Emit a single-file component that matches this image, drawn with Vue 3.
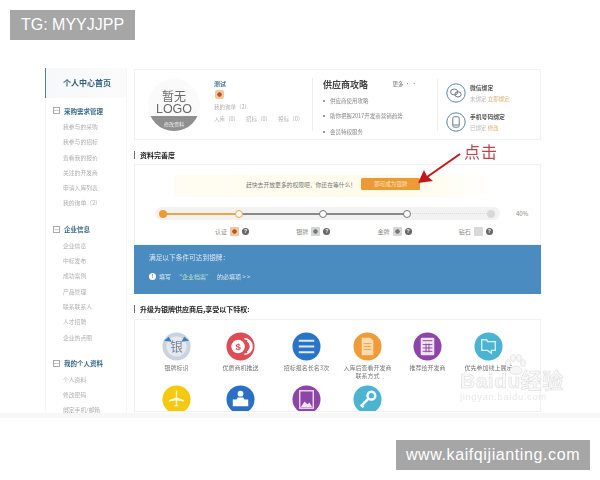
<script setup>
const groups = [
  { title: '采购需求管理', items: ['我参与的采购', '我参与的招标', '查看我的报价', '关注的开发商', '申请入库列表', '我的询单（2）'] },
  { title: '企业信息', items: ['企业信息', '中标发布', '成功案例', '产品管理', '联系联系人', '人才招聘', '企业热点图'] },
  { title: '我的个人资料', items: ['个人资料', '修改密码', '绑定手机/邮箱'] },
]
const news = ['供应商使用攻略', '助你把握2017开发商营销趋势', '会员特权服务']
const stages = [
  { name: '认证', tone: 'orange' },
  { name: '银牌', tone: 'grey' },
  { name: '金牌', tone: 'grey' },
  { name: '钻石', tone: 'light' },
]
const perks = [
  { label: '银牌标识', color: '#c9d2de', kind: 'silver' },
  { label: '优质商机推送', color: '#dc4d55', kind: 'coin' },
  { label: '招标报名长名3次', color: '#2a74c8', kind: 'list' },
  { label: '入库后查看开发商\n联系方式', color: '#f09a38', kind: 'doc' },
  { label: '推荐给开发商', color: '#8d46a8', kind: 'calc' },
  { label: '优先参加线上展示', color: '#4ab4d2', kind: 'screen' },
  { label: '', color: '#f5c90f', kind: 'plane' },
  { label: '', color: '#2a6fc4', kind: 'person' },
  { label: '', color: '#8d46a8', kind: 'photo' },
  { label: '', color: '#4ab4d2', kind: 'key' },
]
</script>

<template>
  <div class="page">
    <div class="shot">
      <aside class="side">
        <div class="home">个人中心首页</div>
        <section v-for="g in groups" :key="g.title" class="group">
          <h4><i class="minus"></i>{{ g.title }}</h4>
          <p v-for="it in g.items" :key="it">{{ it }}</p>
        </section>
      </aside>

      <main class="main">
        <div class="card top">
          <div class="logo">
            <span class="l1">暂无</span>
            <span class="l2">LOGO</span>
            <span class="l3">修改资料</span>
          </div>
          <div class="who">
            <b>测试</b>
            <i class="medal"></i>
            <p>我的询单（2）</p>
            <p class="counts"><span>入库（0）</span><span>招标（0）</span><span>投标（0）</span></p>
          </div>
          <div class="guide">
            <div class="guide-head"><strong>供应商攻略</strong><span>更多 • •</span></div>
            <p v-for="n in news" :key="n"><i></i>{{ n }}</p>
          </div>
          <div class="binds">
            <div class="bind">
              <svg viewBox="0 0 20 20" class="bind-ic">
                <circle cx="10" cy="10" r="9.2" fill="#fff" stroke="#5d8a9c" />
                <ellipse cx="8.2" cy="9" rx="3.6" ry="3" fill="none" stroke="#6a7d88" />
                <ellipse cx="12" cy="11.4" rx="3.2" ry="2.6" fill="none" stroke="#6a7d88" />
              </svg>
              <div><b>微信绑定</b><p>未绑定 <em>立即绑定</em></p></div>
            </div>
            <div class="bind">
              <svg viewBox="0 0 20 20" class="bind-ic">
                <circle cx="10" cy="10" r="9.2" fill="#fff" stroke="#5d8a9c" />
                <rect x="6.8" y="4.8" width="6.4" height="10.4" rx="1.4" fill="none" stroke="#6a7d88" />
                <path d="M7 13h6" stroke="#6a7d88" />
              </svg>
              <div><b>手机号码绑定</b><p>已绑定 <em>修改</em></p></div>
            </div>
          </div>
        </div>

        <h3 class="sec first">资料完善度</h3>
        <div class="card progress">
          <div class="notice">
            <span>赶快去开放更多的权限吧，你还在等什么！</span>
            <button>即可成为银牌</button>
          </div>
          <div class="track-row">
            <div class="track">
              <div class="line done"></div>
              <div class="line mid"></div>
              <div class="line dots"></div>
              <i class="node n1"></i>
              <i class="node n2"></i>
              <i class="node n3"></i>
              <i class="node n4"></i>
              <i class="node n5"></i>
            </div>
            <span class="pct">40%</span>
          </div>
          <div class="stages">
            <div v-for="s in stages" :key="s.name" class="stage">
              {{ s.name }}<i class="tag" :class="s.tone"></i><i class="help">?</i>
            </div>
          </div>
        </div>

        <div class="blue">
          <p>满足以下条件可达到银牌：</p>
          <p class="req"><i>!</i>填写 <span>“企业档案”</span> 的必填项 &gt; &gt;</p>
        </div>

        <h3 class="sec second">升级为银牌供应商后,享受以下特权:</h3>
        <div class="card perks">
          <div v-for="p in perks" :key="p.kind" class="perk">
            <svg viewBox="0 0 30 30" class="perk-ic">
              <circle cx="15" cy="15" r="14.5" :fill="p.color" />
              <template v-if="p.kind === 'silver'">
                <circle cx="15" cy="15" r="10.500" fill="#e4e8ef" />
                <path d="M2 9l5-4 3 5zM28 9l-5-4-3 5z" fill="#3f7fc0" />
                <text x="15" y="20" text-anchor="middle" class="glyph">银</text>
              </template>
              <template v-else-if="p.kind === 'coin'">
                <path d="M19 7a8 8 0 0 1 0 16M22 9a7 7 0 0 1 0 12" fill="none" stroke="#fff" stroke-width="1.6" />
                <circle cx="12.5" cy="15" r="7" fill="#fff" />
                <text x="12.5" y="18.5" text-anchor="middle" class="dollar">$</text>
              </template>
              <path v-else-if="p.kind === 'list'" d="M7 9h16M7 15h16M7 21h16" stroke="#dbe8f6" stroke-width="2" />
              <template v-else-if="p.kind === 'doc'">
                <path d="M9 6h9l3 3v15H9z" fill="#fbdcae" />
                <path d="M11 12h8M11 15h8M11 18h8" stroke="#e8a050" />
              </template>
              <template v-else-if="p.kind === 'calc'">
                <rect x="8" y="6" width="14" height="18" rx="1" fill="#efe3f4" />
                <path d="M10 9h10M10 13h10M10 16.500h10M10 20h10M13.500 12v9M16.500 12v9" stroke="#8d46a8" />
              </template>
              <path v-else-if="p.kind === 'screen'" d="M8 8h5l1 2h8v9h-4v3l-4-3H8z" fill="none" stroke="#d9f1f7" stroke-width="1.4" />
              <path v-else-if="p.kind === 'plane'" d="M14.300 6h1.400v7l7 2.500v1.500l-7-1v4.500l2 1.500H12.300l2-1.500V16l-7 1v-1.500l7-2.500z" fill="#fff8d8" />
              <template v-else-if="p.kind === 'person'">
                <circle cx="15" cy="9" r="3" fill="#fff" />
                <path d="M12 13h6l1 2h4v7H7v-7h4z" fill="#fff" />
              </template>
              <template v-else-if="p.kind === 'photo'">
                <rect x="8" y="6" width="14" height="18" fill="none" stroke="#efe3f4" stroke-width="1.4" />
                <path d="M9 23l4-6 3 3 2-2 3 5z" fill="#efe3f4" />
              </template>
              <template v-else>
                <circle cx="19" cy="11" r="4" fill="none" stroke="#fff" stroke-width="2.6" />
                <path d="M16 14l-8 8M9 21l2 2" stroke="#fff" stroke-width="2.6" />
              </template>
            </svg>
            <span>{{ p.label }}</span>
          </div>
        </div>
      </main>
    </div>
    <div class="band"></div>

    <svg class="paw" viewBox="0 0 24 22">
      <g fill="#f7f7f7" stroke="#e6e6e6">
        <ellipse cx="5" cy="9" rx="2.500" ry="3.500" />
        <ellipse cx="10" cy="4" rx="2.500" ry="3.500" />
        <ellipse cx="16" cy="4" rx="2.500" ry="3.500" />
        <ellipse cx="20" cy="9" rx="2.500" ry="3.500" />
        <path d="M7 18c0-4 3-6 6-6s6 2 6 6c0 3-12 3-12 0z" />
      </g>
    </svg>
    <div class="wm">
      <span class="wm1">Baidu经验</span>
      <span class="wm2">jingyan.baidu.com</span>
    </div>

    <div class="note">点击</div>
    <svg class="arrow" viewBox="0 0 48 36">
      <path d="M45 4 L12 27" stroke="#c4161c" stroke-width="2" fill="none" />
      <path d="M3 33 L9 20 L12 26 L18 31 Z" fill="#c4161c" />
    </svg>

    <div class="tag-tl">TG: MYYJJPP</div>
    <div class="tag-br">www.kaifqijianting.com</div>
  </div>
</template>

<style scoped>
.page {
  position: relative;
  width: 600px;
  height: 480px;
  overflow: hidden;
  background: #fff;
  font-family: "Noto Sans CJK SC", "Liberation Sans", sans-serif;
}
.shot {
  display: flex;
  gap: 7px;
  width: 496px;
  height: 345px;
  margin-left: 45px;
  padding-top: 68px;
  overflow: hidden;
  filter: blur(0.5px);
}
.band {
  height: 5px;
  background: #f7f7f7;
}
p, h3, h4 { margin: 0; font-weight: normal; }
i { font-style: normal; display: block; }

.side {
  width: 82px;
  flex: none;
  border-right: 1px solid #f6f6f6;
  border-left: 1px solid #f6f6f6;
  box-sizing: border-box;
}
.home {
  height: 30px;
  margin: 0 0 4px -1px;
  border-left: 1.500px solid #5b7c90;
  background: linear-gradient(90deg, #f7f8fa, #fbfbfc);
  color: #2f5f7c;
  font: bold 8px/30px "Noto Sans CJK SC", serif;
  padding-left: 17px;
}
.group { margin-bottom: 10px; padding-left: 7px; }
.group h4 {
  display: flex;
  align-items: center;
  gap: 4px;
  height: 17px;
  font-size: 6.500px;
  font-weight: bold;
  color: #3b6a88;
}
.minus {
  width: 5px;
  height: 5px;
  border: 0.600px solid #aaa;
  background: linear-gradient(#aaa, #aaa) center / 100% 0.600px no-repeat;
}
.group p {
  height: 15.300px;
  line-height: 15.300px;
  padding-left: 10px;
  font-size: 5.800px;
  color: #b0b0b0;
}

.main { width: 407px; flex: none; }
.card {
  border: 1px solid #f1f1f1;
  box-sizing: border-box;
  background: #fff;
}
.top {
  display: flex;
  height: 71px;
  margin-top: 1px;
}
.logo {
  position: relative;
  width: 52px;
  height: 52px;
  margin: 9px 0 0 13px;
  border-radius: 50%;
  background: linear-gradient(#fafafa 72%, #8f8f8f 72%);
  overflow: hidden;
  text-align: center;
  color: #6b6b6b;
  flex: none;
}
.logo span { display: block; }
.l1 { font-size: 12px; line-height: 13px; margin-top: 10px; }
.l2 { font: 12.500px/14px "Liberation Sans", sans-serif; }
.l3 { font-size: 5px; line-height: 10px; margin-top: 3px; color: #f2f2f2; }
.who {
  width: 98px;
  margin-left: 14px;
  padding-top: 9px;
  font-size: 5.500px;
  color: #b0b0b0;
  flex: none;
}
.who b { display: block; color: #4a7a9a; font-size: 6px; line-height: 10px; }
.medal {
  width: 9px;
  height: 9px;
  margin: 1px 0 3px 1px;
  border-radius: 2px;
  background: radial-gradient(circle, #c4502a 30%, #eec9a0 40%);
}
.who p { line-height: 11px; }
.counts { display: flex; gap: 7px; margin-top: 1px; white-space: nowrap; }
.guide {
  width: 125px;
  height: 53px;
  margin-top: 8px;
  padding-left: 10px;
  border-left: 1px solid #eee;
  box-sizing: border-box;
  flex: none;
}
.guide-head {
  display: flex;
  align-items: center;
  justify-content: space-between;
  padding-right: 20px;
  height: 12px;
  margin-bottom: 3px;
}
.guide-head strong { font-size: 9px; color: #444; font-weight: bold; }
.guide-head span { font-size: 5.500px; color: #777; }
.guide p {
  display: flex;
  align-items: center;
  gap: 5px;
  height: 15.500px;
  font-size: 5.500px;
  color: #888;
  white-space: nowrap;
}
.guide p i { width: 2px; height: 2px; background: #777; border-radius: 50%; }
.binds {
  flex: 1;
  height: 52px;
  margin-top: 9px;
  padding: 4px 0 0 8px;
  border-left: 1px solid #eee;
  box-sizing: border-box;
}
.bind { display: flex; gap: 4px; height: 29px; font-size: 5.500px; color: #bbb; }
.bind-ic { width: 20px; height: 20px; flex: none; }
.bind b { display: block; color: #555; line-height: 9px; font-size: 5.800px; margin-bottom: 3px; }
.bind em { font-style: normal; color: #e0b070; }

.sec {
  display: flex;
  align-items: center;
  border-left: 1.500px solid #777;
  padding-left: 5px;
  height: 8px;
  font-size: 7px;
  font-weight: bold;
  color: #222;
}
.first { margin: 11px 0 5px; }
.second { margin: 11px 0 6px; }

.progress { height: 81px; padding-top: 10px; position: relative; }
.notice {
  display: flex;
  align-items: center;
  margin-left: 39px;
  width: 325px;
  height: 22px;
  padding: 0 0 4px 72px;
  box-sizing: border-box;
  background: linear-gradient(90deg, #fffdf3, #fffbe9 70%, #fff);
  font-size: 5.800px;
  color: #777;
  white-space: nowrap;
}
.notice button {
  width: 59px;
  height: 12px;
  margin-left: 5px;
  padding: 0;
  border: 0;
  border-radius: 1.500px;
  background: #eb9a35;
  color: #fbe6c4;
  font: 5.500px/12px "Noto Sans CJK SC", sans-serif;
}
.track-row {
  display: flex;
  align-items: center;
  margin: 10px 0 0 20px;
}
.track {
  position: relative;
  width: 345px;
  height: 13px;
  border-radius: 7px;
  background: #f2f2f2;
  flex: none;
}
.line { position: absolute; top: 6px; height: 1.500px; }
.done { left: 8px; width: 76px; background: #eda346; }
.mid { left: 84px; width: 168px; background: #8a8a8a; }
.dots { left: 252px; width: 84px; border-top: 1px dotted #ddd; height: 0; }
.node {
  position: absolute;
  top: 2.500px;
  width: 8px;
  height: 8px;
  border-radius: 50%;
  box-sizing: border-box;
}
.n1 { left: 4px; background: #ee9c32; }
.n2 { left: 80px; background: #fff; border: 1.500px solid #eda346; }
.n3 { left: 164px; background: #fff; border: 1.500px solid #777; }
.n4 { left: 248px; background: #fff; border: 1.500px solid #777; }
.n5 { left: 332px; background: #d8d8d8; }
.pct { margin-left: 16px; font-size: 6px; color: #888; }
.stages {
  display: flex;
  margin: 7px 0 0 80px;
  white-space: nowrap;
}
.stage {
  display: flex;
  align-items: center;
  gap: 3px;
  width: 85px;
  font-size: 6px;
  color: #888;
}
.tag { width: 9px; height: 9px; border-radius: 1px; background: #cfcfcf; }
.tag.orange { background: radial-gradient(circle, #c4502a 30%, #eec9a0 40%); }
.tag.grey { background: radial-gradient(circle, #777 30%, #d5d5d5 40%); }
.tag.light { background: #d8d8d8; }
.help {
  width: 7px;
  height: 7px;
  border-radius: 50%;
  background: #666;
  color: #fff;
  font: bold 5px/7px "Liberation Sans", sans-serif;
  text-align: center;
}

.blue {
  height: 49px;
  padding: 7px 0 0 15px;
  box-sizing: border-box;
  background: #4a8bc0;
  color: #dbe9f3;
  font-size: 6.700px;
  line-height: 11px;
}
.req {
  display: flex;
  align-items: center;
  gap: 3px;
  margin-top: 8px;
  font-size: 6px;
}
.req i {
  width: 7px;
  height: 7px;
  border-radius: 50%;
  background: #fff;
  color: #4a8bc0;
  font: bold 5px/7px "Liberation Sans", sans-serif;
  text-align: center;
}
.req span { color: #b9e0c8; margin: 0 2px; }

.perks {
  display: grid;
  grid-template-columns: 62px 66px 66px 56px 64px 58px;
  grid-auto-rows: 53px;
  height: 93px;
  padding: 12px 0 0 10.500px;
  overflow: hidden;
}
.perk {
  display: flex;
  flex-direction: column;
  align-items: center;
  gap: 3px;
}
.perk-ic { width: 29px; height: 29px; flex: none; }
.perk span {
  font-size: 6px;
  line-height: 8px;
  color: #777;
  text-align: center;
  white-space: pre;
}
.glyph { font-size: 13px; fill: #7c8796; font-family: "Noto Sans CJK SC", sans-serif; }
.dollar { font: bold 10px "Liberation Sans", sans-serif; fill: #dc4d55; }

.paw {
  position: absolute;
  left: 503px;
  top: 354px;
  width: 24px;
  height: 22px;
  filter: blur(0.5px);
}
.wm {
  position: absolute;
  left: 460px;
  top: 372px;
  display: flex;
  flex-direction: column;
  filter: blur(0.5px);
}
.wm1 {
  font: bold 21px/18px "Liberation Sans", "Noto Sans CJK SC", sans-serif;
  color: #f8f8f8;
  -webkit-text-stroke: 0.6px #dedede;
  letter-spacing: 0.500px;
}
.wm2 {
  margin-top: 1px;
  font: 9.500px/12px "Liberation Sans", sans-serif;
  color: #e9e9e9;
  letter-spacing: 0.600px;
}

.note {
  position: absolute;
  left: 464px;
  top: 139px;
  font: 16px/24px "Noto Sans CJK SC", serif;
  color: #b5474c;
  letter-spacing: 1px;
}
.arrow {
  position: absolute;
  left: 415px;
  top: 150px;
  width: 48px;
  height: 36px;
}
.tag-tl, .tag-br {
  position: absolute;
  height: 30px;
  background: #a6a6a6;
  color: #fff;
  font: 16px/30px "Liberation Sans", sans-serif;
  text-align: center;
}
.tag-tl { left: 10px; top: 10px; width: 125px; }
.tag-br { left: 396px; top: 440px; width: 194px; letter-spacing: 0.600px; }
</style>
